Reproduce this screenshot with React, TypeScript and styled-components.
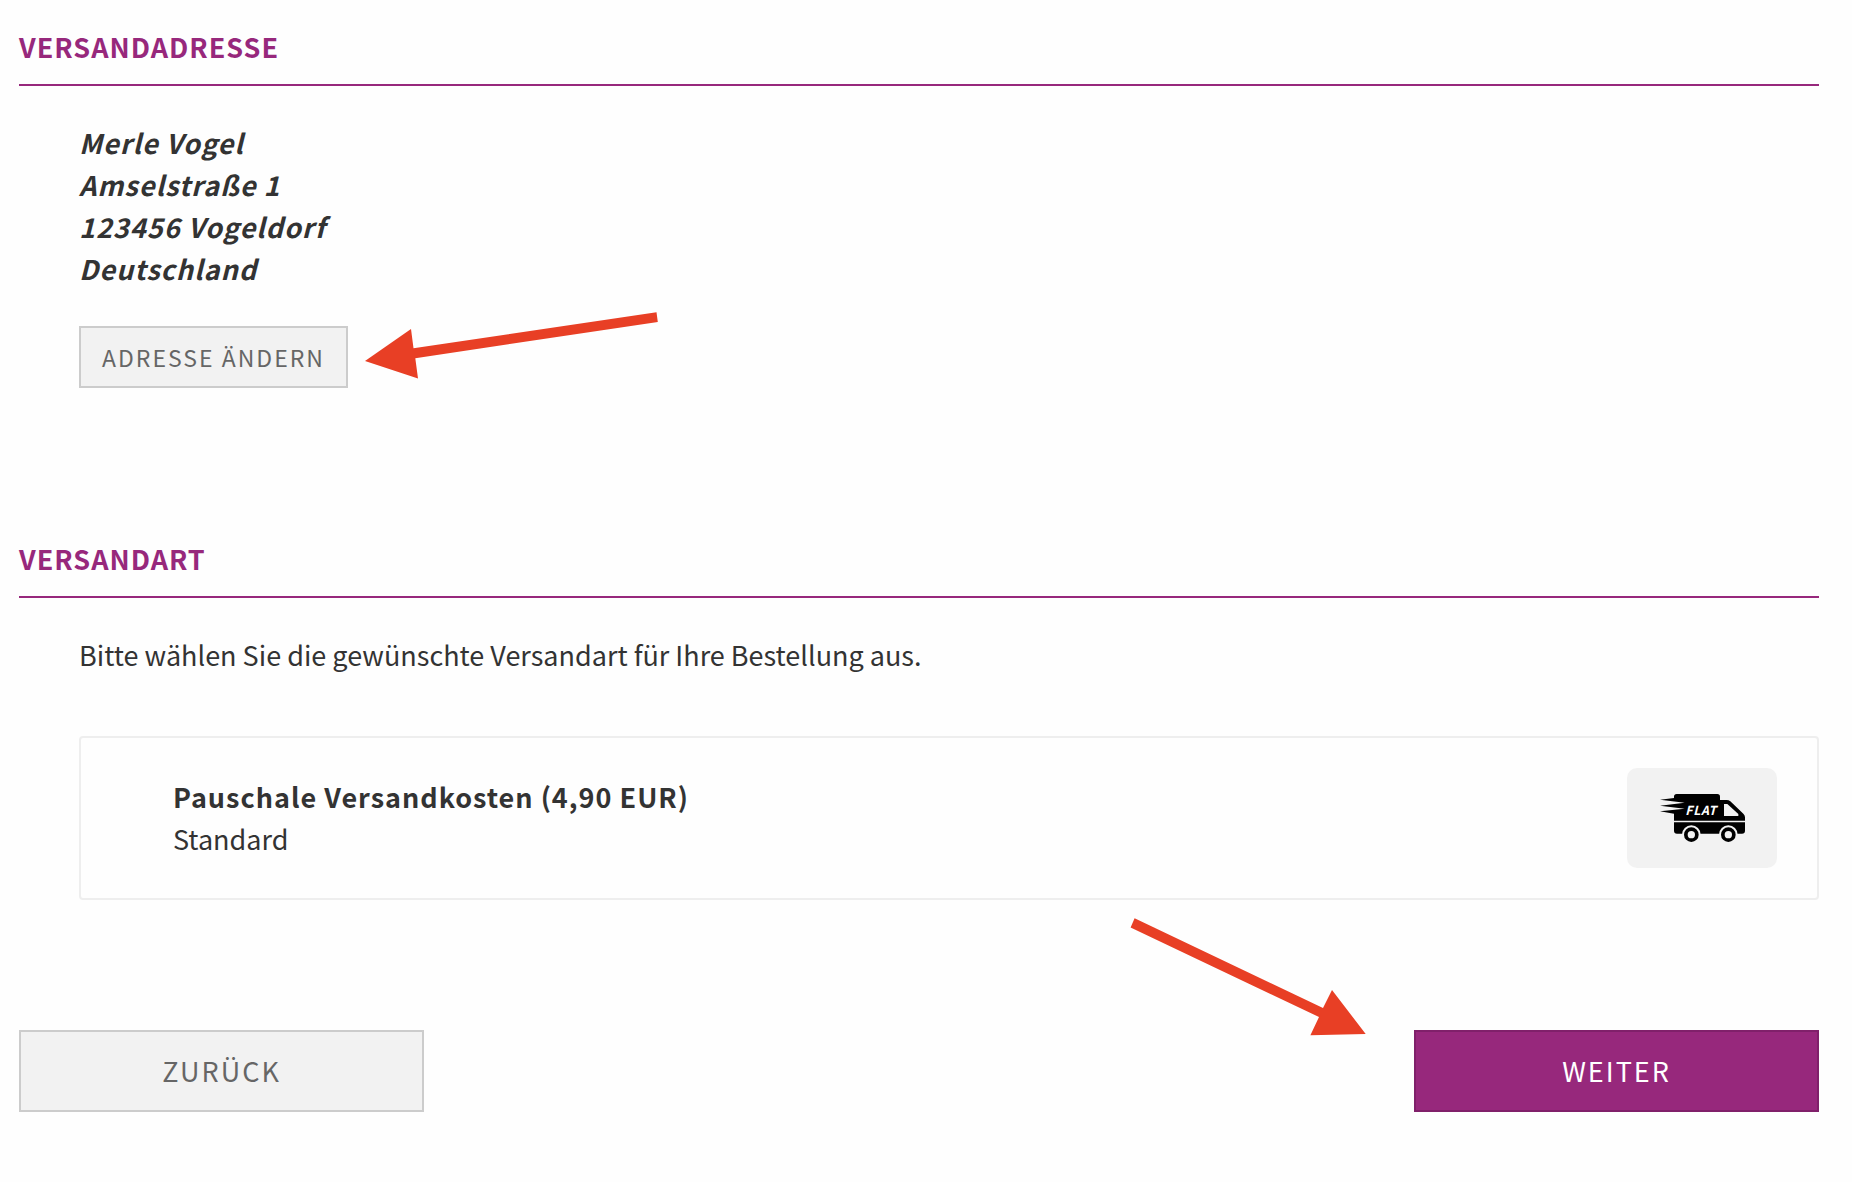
import React from "react";
import styled, { createGlobalStyle } from "styled-components";

const purple = "#97287c";

const GlobalStyle = createGlobalStyle`
  *, *::before, *::after { box-sizing: border-box; }
  body {
    margin: 0;
    background: #fefefe;
    color: #333;
    font-family: "Noto Sans CJK SC", "Noto Sans", sans-serif;
    font-size: 27px;
    line-height: 42px;
  }
`;

const Page = styled.main`
  padding: 26px 33px 70px 19px;
`;

const Section = styled.section<{ $gap: number }>`
  margin-bottom: ${(p) => p.$gap}px;
`;

const Heading = styled.h2`
  margin: 0;
  padding-bottom: 16px;
  border-bottom: 2px solid ${purple};
  color: ${purple};
  font-size: 27px;
  font-weight: 700;
  letter-spacing: 1px;
  text-transform: uppercase;
`;

const Content = styled.div`
  padding: 36px 0 0 60px;
`;

const Address = styled.address`
  margin-bottom: 36px;
  font-style: italic;
  font-weight: 700;
  letter-spacing: 1px;
`;

const Line = styled.span`
  display: block;
`;

const Anchor = styled.div`
  position: relative;
  display: flex;
  width: fit-content;
`;

const Button = styled.button<{ $primary?: boolean; $wide?: boolean }>`
  width: ${(p) => (p.$wide ? "405px" : "auto")};
  height: ${(p) => (p.$wide ? 82 : 62)}px;
  padding: 0 21px;
  border: 2px solid ${(p) => (p.$primary ? "#80206a" : "#ccc")};
  border-radius: 0;
  background: ${(p) => (p.$primary ? purple : "#f2f2f2")};
  color: ${(p) => (p.$primary ? "#fff" : "#666")};
  font-family: inherit;
  font-size: ${(p) => (p.$wide ? 27 : 23)}px;
  line-height: 42px;
  letter-spacing: 2px;
  text-transform: uppercase;
  white-space: nowrap;
  cursor: pointer;
`;

const Text = styled.p`
  margin: 0 0 60px;
`;

const Card = styled.div`
  display: flex;
  align-items: center;
  justify-content: space-between;
  padding: 30px 40px 30px 92px;
  border: 2px solid #eee;
  border-radius: 4px;
`;

const CardText = styled.div`
  display: flex;
  flex-direction: column;
`;

const CardTitle = styled.strong`
  font-weight: 700;
  letter-spacing: 1px;
`;

const IconBox = styled.div`
  display: flex;
  align-items: center;
  justify-content: center;
  width: 150px;
  height: 100px;
  border-radius: 10px;
  background: #f2f2f2;
`;

const Actions = styled.div`
  display: flex;
  justify-content: space-between;
`;

const ArrowLeft = styled.svg`
  position: absolute;
  left: 286px;
  top: -14px;
  pointer-events: none;
`;

const ArrowRight = styled.svg`
  position: absolute;
  right: 453px;
  top: -112px;
  pointer-events: none;
`;

const Truck = () => (
  <svg width="85" height="48" viewBox="150 222 255 144" role="img" aria-label="Flat">
    <path d="M192 230Q192 222 200 222H322Q330 222 330 230V240H350Q356 240 361 244L400 281Q405 286 405 292V332Q405 341 396 341H201Q192 341 192 332V281L150 274L224 266L150 257L224 248L150 239L192 234Z" />
    <path d="M342 252H352L385 282V288H342Z" fill="#f2f2f2" />
    <path d="M192 302H405V307H192Z" fill="#f2f2f2" />
    {[244, 355].map((x) => (
      <g key={x}>
        <circle cx={x} cy="344" r="28" fill="#f2f2f2" />
        <circle cx={x} cy="344" r="16.5" fill="none" stroke="#000" strokeWidth="11" />
      </g>
    ))}
    <text x="226" y="285" fill="#fff" fontSize="37" fontWeight="700" fontStyle="italic" letterSpacing="2">
      FLAT
    </text>
  </svg>
);

export default function App() {
  return (
    <>
      <GlobalStyle />
      <Page>
        <Section $gap={150}>
          <Heading>Versandadresse</Heading>
          <Content>
            <Address>
              <Line>Merle Vogel</Line>
              <Line>Amselstraße 1</Line>
              <Line>123456 Vogeldorf</Line>
              <Line>Deutschland</Line>
            </Address>
            <Anchor>
              <Button type="button">Adresse ändern</Button>
              <ArrowLeft width="293" height="67" viewBox="365 312 293 67" aria-hidden="true">
                <path d="M365 361L411 329L413.500 348.200L656.500 312.300L657.800 322L415.300 358.200L418 378.500Z" fill="#e83f25" />
              </ArrowLeft>
            </Anchor>
          </Content>
        </Section>
        <Section $gap={130}>
          <Heading>Versandart</Heading>
          <Content>
            <Text>Bitte wählen Sie die gewünschte Versandart für Ihre Bestellung aus.</Text>
            <Card>
              <CardText>
                <CardTitle>Pauschale Versandkosten (4,90 EUR)</CardTitle>
                <span>Standard</span>
              </CardText>
              <IconBox>
                <Truck />
              </IconBox>
            </Card>
          </Content>
        </Section>
        <Actions>
          <Button type="button" $wide>Zurück</Button>
          <Anchor>
            <Button type="button" $wide $primary>Weiter</Button>
            <ArrowRight width="236" height="118" viewBox="1130 918 236 118" aria-hidden="true">
              <path d="M1365.700 1034L1332 990L1323 1008L1134.600 918.300L1130.600 927.500L1319 1017L1310.400 1035.200Z" fill="#e83f25" />
            </ArrowRight>
          </Anchor>
        </Actions>
      </Page>
    </>
  );
}
